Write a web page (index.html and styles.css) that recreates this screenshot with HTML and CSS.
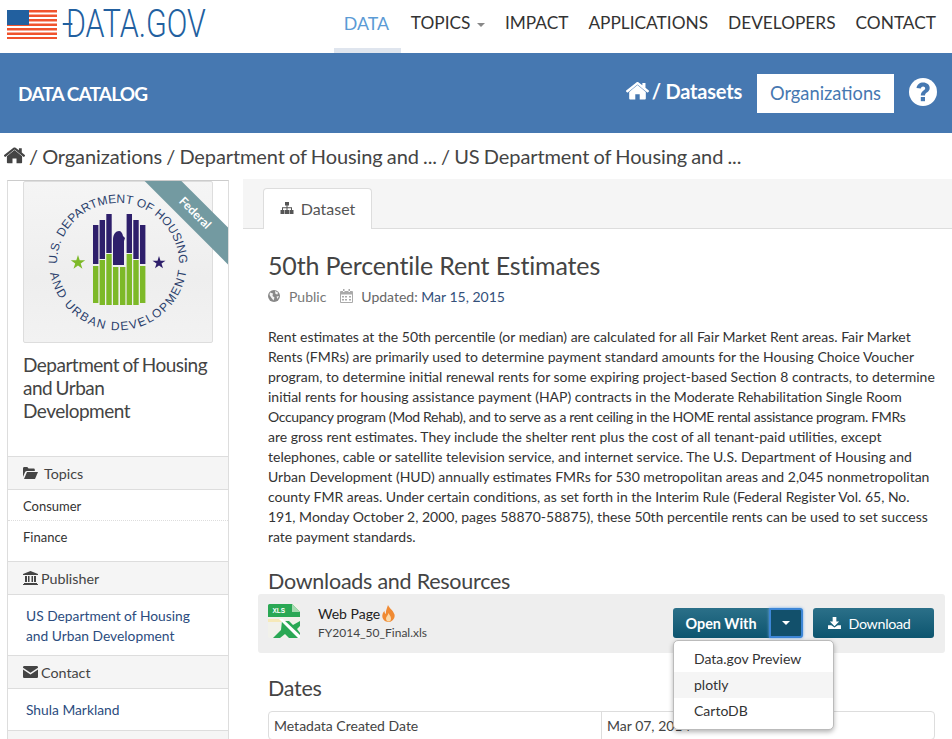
FILE: index.html
```html
<!DOCTYPE html>
<html lang="en">
<head>
    <meta charset="UTF-8">
    <meta name="viewport" content="width=device-width, initial-scale=1.0">
    <title>50th Percentile Rent Estimates - Data.gov</title>
    <link rel="stylesheet" href="styles.css">
</head>
<body>
    <svg class="defs" width="0" height="0">
        <symbol id="home" viewBox="0 0 26 20"><path d="M13 3.2 3.6 11v7.6c0 .6.4 1 1 1h5.900v-6h5v6h5.900c.6 0 1-.4 1-1V11z"/><path d="M25.800 9.500 22 6.300V1h-3.500v2.400L14.300.4c-.8-.6-1.800-.6-2.600 0L.2 9.500c-.3.300-.3.700-.1 1l.9 1c.3.300.7.300 1 .1L13 2.700l11 8.900c.3.200.7.200 1-.1l.9-1c.2-.300.200-.700-.1-1z"/></symbol>
    </svg>

    <header class="topbar">
        <a class="logo" href="#">
            <svg class="flag" width="50" height="29" viewBox="0 0 50 29">
                <rect width="50" height="29" fill="#f0532d"/>
                <g fill="#fff">
                    <rect y="2.500" width="50" height="2"/><rect y="7" width="50" height="2"/>
                    <rect y="11.500" width="50" height="2"/><rect y="16" width="50" height="2"/>
                    <rect y="20.500" width="50" height="2"/><rect y="25" width="50" height="2"/>
                </g>
                <rect width="22" height="15" fill="#22609f"/>
            </svg>
            <span class="logo-text">DATA.GOV</span>
        </a>
        <nav class="mainnav">
            <a class="active" href="#">DATA</a>
            <a href="#">TOPICS <i class="caret"></i></a>
            <a href="#">IMPACT</a>
            <a href="#">APPLICATIONS</a>
            <a href="#">DEVELOPERS</a>
            <a href="#">CONTACT</a>
        </nav>
    </header>

    <div class="catalogbar">
        <span class="catalog-title">DATA CATALOG</span>
        <div class="catalog-links">
            <svg class="home-icon" width="23" height="18"><use href="#home" fill="#fff"/></svg>
            <span class="catalog-crumb">/ Datasets</span>
            <a class="org-btn" href="#">Organizations</a>
            <svg class="help" width="28" height="28" viewBox="0 0 28 28">
                <circle cx="14" cy="14" r="14" fill="#fff"/>
                <path d="M7.500 10c.5-3.500 3.200-5.500 6.700-5.500 3.700 0 6.500 2.300 6.500 5.500 0 4.200-4.700 4.400-4.700 7.500h-4.200c0-4.700 4.400-5 4.400-7.300 0-1.100-1-1.800-2.100-1.800-1.200 0-2 .7-2.300 2z" fill="#4678b1"/>
                <rect x="11.800" y="19" width="4.200" height="4.200" fill="#4678b1"/>
            </svg>
        </div>
    </div>

    <div class="crumbs">
        <svg width="21" height="17"><use href="#home" fill="#444"/></svg>
        <span>/ Organizations / Department of Housing and ... / US Department of Housing and ...</span>
    </div>

    <div class="wrapper">
        <aside class="sidebar">
            <div class="org-box">
                <div class="seal">
                    <svg width="188" height="160" viewBox="0 0 188 160">
                        <defs>
                            <path id="arc-top" d="M33 82a61 61 0 1 1 122 0"/>
                            <path id="arc-bottom" d="M26 91a69 69 0 0 0 136 0"/>
                        </defs>
                        <text class="seal-text"><textPath href="#arc-top" textLength="191">U.S. DEPARTMENT OF HOUSING</textPath></text>
                        <text class="seal-text"><textPath href="#arc-bottom" textLength="195">AND URBAN DEVELOPMENT</textPath></text>
                        <g fill="#2e1f6b">
                            <rect x="69" y="43" width="5.400" height="39"/><rect x="75.600" y="38" width="5.400" height="39"/>
                            <rect x="82.300" y="32" width="5.400" height="39"/><rect x="102.600" y="32" width="5.400" height="39"/>
                            <rect x="109.300" y="38" width="5.400" height="39"/><rect x="116" y="43" width="5.400" height="39"/>
                            <path d="M89 83V58c0-6 3-9 6-9 2 0 3.500 2 4 5l2 2-1 3v24z"/>
                        </g>
                        <g fill="#7db928">
                            <rect x="69" y="84" width="5.400" height="37"/><rect x="75.600" y="78" width="5.400" height="45"/>
                            <rect x="82.300" y="72" width="5.400" height="51"/><rect x="89" y="85" width="5.400" height="38"/>
                            <rect x="96" y="85" width="5.400" height="38"/><rect x="102.600" y="72" width="5.400" height="51"/>
                            <rect x="109.300" y="78" width="5.400" height="45"/><rect x="116" y="84" width="5.400" height="37"/>
                        </g>
                        <path d="m54 73 1.700 5.200h5.500l-4.500 3.300 1.700 5.200-4.400-3.200-4.500 3.200 1.700-5.200-4.400-3.300h5.500z" fill="#7db928"/>
                        <path d="m135 74 1.500 4.700h5l-4 2.900 1.500 4.700-4-2.900-4 2.900 1.500-4.700-4-2.900h5z" fill="#2e1f6b"/>
                    </svg>
                </div>
                <div class="ribbon-clip"><span class="ribbon">Federal</span></div>
                <h2>Department of Housing and Urban Development</h2>
            </div>

            <h3 class="side-head">
                <svg width="15" height="12" viewBox="0 0 15 12"><path d="M0 10V1.500C0 .7.500 0 1.300 0h3l1.300 1.500h5c.7 0 1.200.5 1.200 1.200V4H4c-.8 0-1.500.4-1.900 1z" fill="#444"/><path d="M1 12 4 5h11l-3 7z" fill="#444"/></svg>
                <span class="head-gap">Topics</span>
            </h3>
            <ul class="topic-list">
                <li>Consumer</li>
                <li>Finance</li>
            </ul>

            <h3 class="side-head">
                <svg width="15" height="14" viewBox="0 0 15 14"><path d="M7.500 0 15 3v1H0V3zM1 12h13v1H1zM0 13h15v1H0zM2 5h2v6H2zM5 5h1.500v6H5zM8.500 5H10v6H8.500zM11 5h2v6h-2z" fill="#444"/></svg>
                Publisher
            </h3>
            <div class="side-link publisher"><a href="#">US Department of Housing and Urban Development</a></div>

            <h3 class="side-head">
                <svg width="15" height="12" viewBox="0 0 15 12"><path d="M1.300 0h12.400c.7 0 1.300.6 1.300 1.300v.5L7.500 6.800 0 1.800v-.5C0 .6.600 0 1.300 0z" fill="#444"/><path d="M0 3.500 7.500 8.500 15 3.500v7.200c0 .7-.6 1.300-1.300 1.300H1.300C.6 12 0 11.400 0 10.700z" fill="#444"/></svg>
                Contact
            </h3>
            <div class="side-link"><a href="#">Shula Markland</a></div>
            <div class="side-foot"></div>
        </aside>

        <main class="content">
            <div class="tabs">
                <a class="tab" href="#">
                    <svg width="14" height="12" viewBox="0 0 14 12"><path d="M5 0h4v3.500H7.500v1.800H12V8h1.500v4h-4V8H11V6.300H7.500V8H9v4H5V8h1.500V6.300H3V8h1.500v4h-4V8H2V5.300h4.500V3.500H5z" fill="#555"/></svg>
                    Dataset
                </a>
            </div>
            <div class="body">
                <h1>50th Percentile Rent Estimates</h1>
                <p class="meta">
                    <svg width="12" height="12" viewBox="0 0 12 12"><circle cx="6" cy="6" r="6" fill="#888"/><path d="M2 2.500 5 3.500 4.500 6 6.500 7.500 5.500 10.500 3.500 8 1.500 5zM7 1l3 1.500-.5 2-2-.5zM8.500 6.500l2.500-.5-1.500 3z" fill="#f2f2f2"/></svg>
                    <span class="public">Public</span>
                    <svg class="cal" width="13" height="14" viewBox="0 0 13 14"><path d="M1 2h11a1 1 0 0 1 1 1v10a1 1 0 0 1-1 1H1a1 1 0 0 1-1-1V3a1 1 0 0 1 1-1zm0 3.500v7.500h11V5.500zM3 0h1.500v3H3zM8.500 0H10v3H8.500zM2 7h2v1.500H2zM5 7h2v1.500H5zM9 7h2v1.500H9zM2 10h2v1.500H2zM5 10h2v1.500H5zM9 10h2v1.500H9z" fill="#aaa" fill-rule="evenodd"/></svg>
                    <span class="updated">Updated: <b>Mar 15, 2015</b></span>
                </p>
                <p class="notes">Rent estimates at the 50th percentile (or median) are calculated for all Fair Market Rent areas. Fair Market<br>
Rents (FMRs) are primarily used to determine payment standard amounts for the Housing Choice Voucher<br>
program, to determine initial renewal rents for some expiring project-based Section 8 contracts, to determine<br>
initial rents for housing assistance payment (HAP) contracts in the Moderate Rehabilitation Single Room<br>
<span class="tight">Occupancy program (Mod Rehab), and to serve as a rent ceiling in the HOME rental assistance program. FMRs</span><br>
are gross rent estimates. They include the shelter rent plus the cost of all tenant-paid utilities, except<br>
telephones, cable or satellite television service, and internet service. The U.S. Department of Housing and<br>
Urban Development (HUD) annually estimates FMRs for 530 metropolitan areas and 2,045 nonmetropolitan<br>
county FMR areas. Under certain conditions, as set forth in the Interim Rule (Federal Register Vol. 65, No.<br>
191, Monday October 2, 2000, pages 58870-58875), these 50th percentile rents can be used to set success<br>
rate payment standards.</p>

                <h2 class="section">Downloads and Resources</h2>
                <div class="resource">
                    <svg class="xls" width="32" height="34" viewBox="0 0 32 34">
                        <rect width="32" height="34" rx="2" fill="#f1f1ea"/>
                        <rect y="15" width="14" height="3" fill="#f6e9b8"/>
                        <path d="M1.500 0H24l8 8v5H0V1.500A1.500 1.500 0 0 1 1.500 0z" fill="#2aa854"/>
                        <path d="M24 0v8h8z" fill="#a6dbb0"/>
                        <path d="M14 17h7l4 4 7-4v5l-3 3 3 4v5H21l-4-4-5 4H5l8-8z" fill="#2aa854"/>
                        <path d="M11 15h4l17 16v3h-2z" fill="#fff"/>
                        <text class="xls-label" x="4.500" y="9">XLS</text>
                    </svg>
                    <div class="res-name">
                        <div class="res-title">Web Page
                            <svg width="13" height="17" viewBox="0 0 13 17"><path d="M6 0c1 3 5 5 6.500 9.500.8 3.500-2 7.500-6 7.500S-.500 13.500.5 9.500c.3-1.500 1-2.500 2-3.500 0 1.500.5 2.500 1.500 3C3.500 6 5 3 6 0z" fill="#f08a33"/><path d="M6.500 8c.5 2 2.500 3 2.500 5.500S7.800 16.500 6.500 16.500 4 15.500 4 13.500 6 10.500 6.500 8z" fill="#fbd9a8"/></svg>
                        </div>
                        <div class="res-file">FY2014_50_Final.xls</div>
                    </div>
                    <div class="res-actions">
                        <div class="split">
                            <a class="btn open" href="#">Open With</a>
                            <a class="btn toggle" href="#"><i class="caret white"></i></a>
                            <ul class="menu">
                                <li>Data.gov Preview</li>
                                <li class="hover">plotly</li>
                                <li>CartoDB</li>
                            </ul>
                        </div>
                        <a class="btn download" href="#">
                            <svg width="13" height="12" viewBox="0 0 14 13"><path d="M5 0h4v5h3L7 10 2 5h3zM0 9h3.500L7 11.500 10.500 9H14v4H0z" fill="#fff"/></svg>
                            Download
                        </a>
                    </div>
                </div>

                <h2 class="section dates">Dates</h2>
                <table class="dates-table">
                    <tr><td>Metadata Created Date</td><td>Mar 07, 2014</td></tr>
                </table>
            </div>
        </main>
    </div>
</body>
</html>
```

FILE: styles.css
```css
* {
    box-sizing: border-box;
}

html, body {
    height: 739px;
    overflow: hidden;
}

body {
    margin: 0;
    background-color: #fff;
    color: #444;
    font-family: "Lato", sans-serif;
    font-size: 13px;
}

a {
    text-decoration: none;
    color: inherit;
}

.defs {
    display: block;
    height: 0;
}

.topbar {
    height: 53px;
    display: flex;
    justify-content: space-between;
    align-items: flex-start;
}

.logo {
    display: flex;
    align-items: flex-start;
    padding: 10px 0 0 7px;
}

.logo-text {
    position: relative;
    display: block;
    margin-left: 9px;
    width: 140px;
    color: #22609f;
    font-family: "Roboto", sans-serif;
    font-weight: 300;
    font-size: 38px;
    line-height: 29px;
    white-space: nowrap;
    transform: scaleX(0.8);
    transform-origin: left center;
}

.logo-text::before {
    content: "";
    position: absolute;
    top: 13px;
    left: -4px;
    width: 12px;
    height: 2px;
    background-color: #22609f;
}

.mainnav {
    display: flex;
    padding-right: 6px;
}

.mainnav a {
    height: 53px;
    padding: 12px 10px 0;
    font-size: 17.300px;
    line-height: 22px;
    color: #333;
}

.mainnav a.active {
    width: 67px;
    color: #5b9bd5;
    border-bottom: 5px solid #dfe5ee;
    font-size: 17.800px;
}

.caret {
    display: inline-block;
    margin-left: 2px;
    vertical-align: middle;
    border-top: 4px solid #888;
    border-left: 4px solid transparent;
    border-right: 4px solid transparent;
}

.caret.white {
    margin: 0;
    border-top-color: #fff;
}

.catalogbar {
    height: 80px;
    background-color: #4678b1;
    color: #fff;
    display: flex;
    justify-content: space-between;
    align-items: center;
    padding: 0 15px 0 18px;
}

.catalog-title {
    font-size: 19px;
    font-weight: 700;
    letter-spacing: -0.85px;
}

.catalog-links {
    display: flex;
    align-items: center;
}

.home-icon {
    margin-top: -4px;
}

.catalog-crumb {
    margin: -4px 0 0 3px;
    font-size: 20px;
    font-weight: 700;
    letter-spacing: -0.2px;
}

.org-btn {
    margin-left: 15px;
    width: 137px;
    height: 39px;
    background-color: #fff;
    color: #4678b1;
    font-size: 18.300px;
    line-height: 39px;
    text-align: center;
}

.help {
    margin: -2px 0 0 15px;
}

.crumbs {
    height: 47px;
    padding: 0 0 2px 4px;
    display: flex;
    align-items: center;
    gap: 4px;
    font-size: 20px;
    letter-spacing: -0.1px;
    word-spacing: -0.8px;
    color: #444;
}

.wrapper {
    display: flex;
    align-items: flex-start;
    padding-left: 7px;
}

.sidebar {
    width: 222px;
    flex: none;
    border: 1px solid #ddd;
    border-top: 1px solid #ccc;
    border-bottom: 0;
}

.org-box {
    position: relative;
    height: 275px;
    padding: 0 15px;
}

.seal {
    width: 190px;
    height: 162px;
    border: 1px solid #ddd;
    border-radius: 2px;
    background: linear-gradient(#f5f5f5, #eee 60%, #f2f2f2);
}

.seal-text {
    font-family: "Liberation Sans", sans-serif;
    font-size: 12px;
    fill: #2b3f6c;
}

.ribbon-clip {
    position: absolute;
    top: 0;
    left: 120px;
    width: 100px;
    height: 85px;
    overflow: hidden;
}

.ribbon {
    position: absolute;
    top: 19px;
    left: -3px;
    width: 140px;
    height: 26px;
    background-color: #739aa1;
    color: #fff;
    font-size: 12px;
    font-weight: 700;
    line-height: 26px;
    text-align: center;
    transform: rotate(45deg);
}

.org-box h2 {
    margin: 10px 0 0;
    font-size: 19px;
    font-weight: 400;
    line-height: 23px;
    letter-spacing: -0.5px;
    word-spacing: -1px;
    color: #444;
}

.side-head {
    margin: 0;
    height: 34px;
    display: flex;
    align-items: center;
    gap: 3px;
    padding-left: 15px;
    background-color: #f5f5f5;
    border-top: 1px solid #ddd;
    border-bottom: 1px solid #ddd;
    font-size: 14.300px;
    font-weight: 400;
    color: #444;
}

.head-gap {
    margin-left: 3px;
}

.topic-list {
    list-style: none;
    margin: 0;
    padding: 0 0 9px;
}

.topic-list li {
    height: 31px;
    padding: 7px 15px 0;
    line-height: 18px;
    color: #333;
}

.topic-list li:first-child {
    border-bottom: 1px dotted #ddd;
}

.side-link {
    padding: 11px 18px 10px;
    font-size: 13.800px;
    line-height: 20px;
    color: #2b4c7e;
}

.publisher {
    padding: 11px 18px 9px;
}

.side-foot {
    height: 20px;
    background-color: #f5f5f5;
    border-top: 1px solid #ddd;
}

.content {
    flex: 1;
    min-width: 0;
    margin-left: 14px;
    margin-top: -1px;
}

.tabs {
    height: 50px;
    padding: 9px 0 0 20px;
    background-color: #f5f5f5;
    border-bottom: 1px solid #ddd;
}

.tab {
    display: flex;
    align-items: center;
    justify-content: center;
    gap: 7px;
    width: 109px;
    height: 41px;
    padding-bottom: 2px;
    background-color: #fff;
    border: 1px solid #ddd;
    border-bottom: 0;
    border-radius: 4px 4px 0 0;
    font-size: 16px;
    color: #555;
}

.body {
    padding: 20px 17px 0 15px;
}

h1 {
    margin: 0 0 0 10px;
    font-size: 25px;
    font-weight: 400;
    line-height: 32px;
    letter-spacing: -0.15px;
    color: #444;
}

.meta {
    display: flex;
    align-items: center;
    margin: 5px 0 0 10px;
    height: 20px;
    font-size: 14px;
    color: #777;
}

.public {
    margin-left: 9px;
}

.cal {
    margin-left: 14px;
}

.updated {
    margin-left: 8px;
    color: #666;
}

.updated b {
    font-weight: 400;
    color: #34507a;
}

.notes {
    margin: 21px 0 0 10px;
    font-size: 14px;
    line-height: 20px;
    color: #333;
    white-space: nowrap;
}

.tight {
    letter-spacing: -0.33px;
}

.section {
    margin: 22px 0 0 10px;
    font-size: 21.500px;
    font-weight: 400;
    line-height: 25px;
    letter-spacing: -0.25px;
    color: #444;
}

.resource {
    display: flex;
    align-items: flex-start;
    justify-content: space-between;
    height: 59px;
    margin: 0 -10px 0 0;
    padding: 14px 11px 0 10px;
    background-color: #eee;
    border-radius: 3px;
}

.xls {
    flex: none;
    margin-top: -4px;
}

.xls-label {
    font-family: "Liberation Sans", sans-serif;
    font-size: 6.500px;
    font-weight: 700;
    fill: #fff;
}

.res-name {
    flex: 1;
    margin-left: 18px;
    margin-top: -5px;
}

.res-title {
    display: flex;
    align-items: center;
    gap: 2px;
    height: 20px;
    font-size: 14px;
    color: #222;
}

.res-file {
    font-size: 12px;
    line-height: 16px;
    color: #444;
    margin-top: 2px;
}

.res-actions {
    display: flex;
    align-items: flex-start;
    gap: 10px;
}

.split {
    position: relative;
    display: flex;
}

.btn {
    height: 30px;
    display: flex;
    align-items: center;
    justify-content: center;
    background: linear-gradient(#2b7089, #0d556f);
    color: #fff;
    font-size: 14.300px;
    border-radius: 3px;
}

.btn.open {
    width: 96px;
    font-weight: 700;
    font-size: 14.400px;
    border-radius: 3px 0 0 3px;
}

.btn.toggle {
    width: 34px;
    background: #12506b;
    border: 2px solid #3d86d6;
    border-radius: 0 3px 3px 0;
    box-shadow: 0 0 3px #6aa5e5;
}

.btn.download {
    width: 121px;
    gap: 7px;
    padding-right: 8px;
    letter-spacing: -0.3px;
}

.menu {
    position: absolute;
    top: 32px;
    left: 0;
    z-index: 5;
    width: 161px;
    margin: 0;
    padding: 5px 0;
    list-style: none;
    background-color: #fff;
    border: 1px solid #bbb;
    border-radius: 5px;
    box-shadow: 0 2px 5px rgba(0, 0, 0, 0.3);
}

.menu li {
    height: 26px;
    padding-left: 20px;
    font-size: 14px;
    line-height: 26px;
    color: #333;
}

.menu li.hover {
    background-color: #f5f5f5;
}

.section.dates {
    margin-top: 23px;
}

.dates-table {
    width: 667px;
    margin: 10px 0 0 10px;
    border-collapse: separate;
    border-spacing: 0;
    border: 1px solid #ddd;
    border-radius: 4px;
}

.dates-table td {
    height: 27px;
    padding: 0 5px;
    font-size: 14px;
    color: #444;
    vertical-align: middle;
}

.dates-table td:first-child {
    width: 333px;
    border-right: 1px solid #ddd;
}
```
